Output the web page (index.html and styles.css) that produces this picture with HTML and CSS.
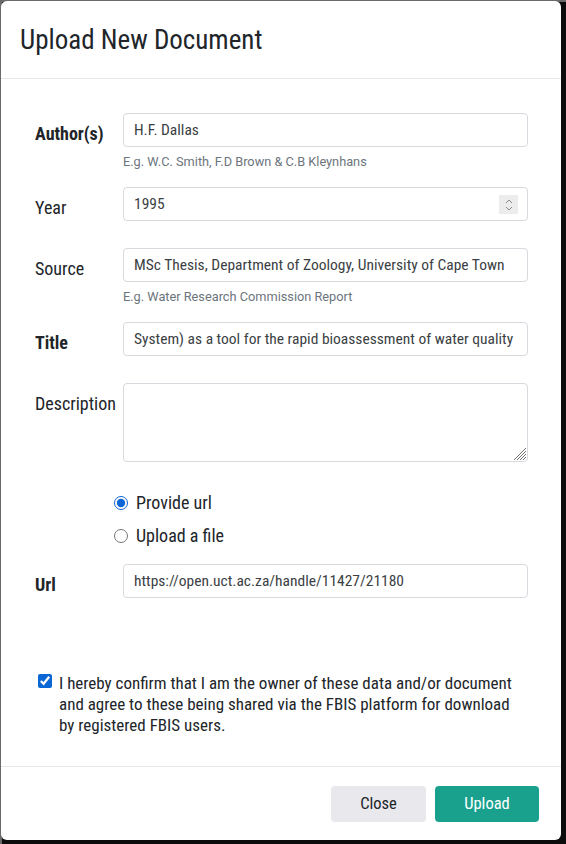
FILE: index.html
```html
<!DOCTYPE html>
<html lang="en">
<head>
<meta charset="utf-8">
<title>Upload New Document</title>
<link rel="stylesheet" href="styles.css">
</head>
<body>
<div class="modal">
  <div class="modal-header">
    <h5 class="modal-title">Upload New Document</h5>
  </div>
  <div class="modal-body">
    <div class="form-row row-help">
      <label class="col-label bold">Author(s)</label>
      <div class="col-field">
        <input class="form-control" type="text" value="H.F. Dallas">
        <div class="help">E.g. W.C. Smith, F.D Brown &amp; C.B Kleynhans</div>
      </div>
    </div>
    <div class="form-row">
      <label class="col-label">Year</label>
      <div class="col-field">
        <div class="field-wrap">
          <input class="form-control" type="text" value="1995">
          <span class="spinner">
            <svg width="10" height="16" viewBox="0 0 10 16"><path d="M2 6 L5 3 L8 6" fill="none" stroke="#8a8a8a" stroke-width="1"/><path d="M2 10 L5 13 L8 10" fill="none" stroke="#8a8a8a" stroke-width="1"/></svg>
          </span>
        </div>
      </div>
    </div>
    <div class="form-row row-help">
      <label class="col-label">Source</label>
      <div class="col-field">
        <input class="form-control" type="text" value="MSc Thesis, Department of Zoology, University of Cape Town">
        <div class="help">E.g. Water Research Commission Report</div>
      </div>
    </div>
    <div class="form-row">
      <label class="col-label bold">Title</label>
      <div class="col-field">
        <input class="form-control" type="text" value="System) as a tool for the rapid bioassessment of water quality">
      </div>
    </div>
    <div class="form-row row-desc">
      <label class="col-label">Description</label>
      <div class="col-field">
        <div class="field-wrap">
          <textarea class="form-control textarea"></textarea>
          <svg class="grip" width="16" height="16" viewBox="0 0 16 16"><path d="M15 3 L3 15 M15 6 L6 15 M15 9 L9 15 M15 12 L12 15" stroke="#6f6f6f" stroke-width="1" fill="none"/></svg>
        </div>
      </div>
    </div>
    <div class="radios">
      <label class="radio"><input type="radio" name="src" checked><span>Provide url</span></label>
      <label class="radio"><input type="radio" name="src"><span>Upload a file</span></label>
    </div>
    <div class="form-row row-url">
      <label class="col-label bold">Url</label>
      <div class="col-field">
        <input class="form-control" type="text" value="https://open.uct.ac.za/handle/11427/21180">
      </div>
    </div>
    <label class="confirm">
      <input type="checkbox" checked>
      <span>I hereby confirm that I am the owner of these data and/or document and agree to these being shared via the FBIS platform for download by registered FBIS users.</span>
    </label>
  </div>
  <div class="modal-footer">
    <button class="btn btn-close">Close</button>
    <button class="btn btn-upload">Upload</button>
  </div>
</div>
</body>
</html>
```

FILE: styles.css
```css
* { box-sizing: border-box; }
html, body {
  margin: 0;
  height: 100%;
}
body {
  background:
    linear-gradient(to bottom, #6a6a6a 0, #6a6a6a 2px, transparent 2px),
    linear-gradient(to right, #6a6a6a 0, #6a6a6a 2px, #0c0c0c 2px);
  font-family: Roboto, "Liberation Sans", sans-serif;
  font-stretch: condensed;
  color: #212529;
  overflow: hidden;
}
.modal {
  margin: 1px 0 0 1px;
  width: 560px;
  height: 839px;
  background: #fff;
  border-radius: 6px;
  display: flex;
  flex-direction: column;
}
.modal-header {
  height: 78px;
  border-bottom: 1px solid #e6e6e6;
  padding: 0 19px;
  display: flex;
  align-items: center;
}
.modal-title {
  margin: 0;
  font-size: 27px;
  font-weight: 400;
  font-stretch: condensed;
  color: #212529;
}
.modal-body {
  flex: 1;
  padding: 34px 33px 0 34px;
}
.form-row {
  display: grid;
  grid-template-columns: 88px 405px;
  margin-bottom: 27px;
}
.form-row.row-help { margin-bottom: 16px; }
.form-row.row-desc { margin-bottom: 29px; }
.col-label {
  font-size: 18px;
  line-height: 24px;
  padding-top: 9px;
  color: #212529;
}
.col-label.bold { font-weight: 700; }
.form-control {
  display: block;
  width: 100%;
  height: 34px;
  border: 1px solid #d6d9dd;
  border-radius: 4px;
  padding: 0 10px;
  font-family: Roboto, "Liberation Sans", sans-serif;
  font-stretch: condensed;
  font-size: 15.5px;
  color: #3b3f44;
  background: #fff;
  outline: none;
}
.textarea {
  height: 79px;
  resize: none;
  padding: 6px 10px;
}
.help {
  margin-top: 6px;
  font-size: 12.75px;
  font-stretch: normal;
  line-height: 18px;
  color: #6c757d;
}
.field-wrap { position: relative; }
.spinner {
  position: absolute;
  right: 10px;
  top: 8px;
  width: 19px;
  height: 19px;
  background: #ececec;
  display: flex;
  align-items: center;
  justify-content: center;
}
.grip {
  position: absolute;
  right: 1px;
  bottom: 1px;
}
.radios {
  padding-left: 79px;
  display: flex;
  flex-direction: column;
  gap: 9px;
  margin-bottom: 16px;
}
.radio {
  display: flex;
  align-items: center;
  gap: 8px;
  font-size: 18px;
  line-height: 24px;
}
.radio input {
  margin: 0;
  width: 14px;
  height: 14px;
  accent-color: #0b66d6;
}
.row-url { margin-bottom: 75px; }
.confirm {
  display: flex;
  align-items: flex-start;
  gap: 7px;
  padding-left: 3px;
  padding-right: 0;
  font-size: 17px;
  line-height: 21px;
  color: #212529;
}
.confirm input {
  margin: 1px 0 0 0;
  width: 14px;
  height: 14px;
  flex: none;
  accent-color: #0b66d6;
}
.modal-footer {
  height: 74px;
  border-top: 1px solid #e6e6e6;
  display: flex;
  align-items: center;
  justify-content: flex-end;
  gap: 9px;
  padding: 0 22px 0 0;
}
.btn {
  height: 36px;
  border: none;
  border-radius: 4px;
  font-family: Roboto, "Liberation Sans", sans-serif;
  font-stretch: condensed;
  font-size: 16.5px;
}
.btn-close {
  width: 95px;
  background: #e8e8ed;
  color: #212529;
}
.btn-upload {
  width: 104px;
  background: #1aa18e;
  color: #fff;
}
```
